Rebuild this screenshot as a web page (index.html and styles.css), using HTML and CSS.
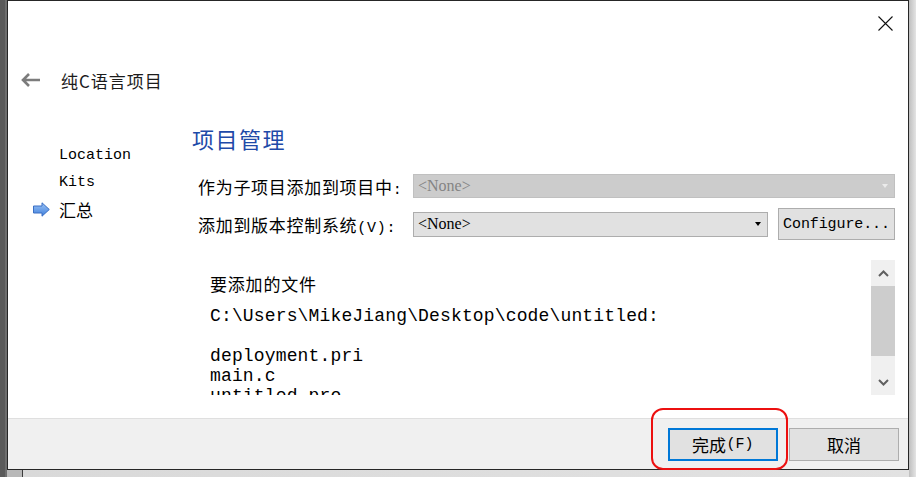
FILE: index.html
```html
<!DOCTYPE html>
<html lang="zh-CN">
<head>
<meta charset="utf-8">
<title>纯C语言项目</title>
<link rel="stylesheet" href="styles.css">
</head>
<body>
<div class="screen">
  <div class="side-left"></div>
  <div class="dialog">
    <div class="titlebar">
      <svg class="close" width="15" height="15" viewBox="0 0 15 15"><path d="M0.5 0.5 L14.5 14.5 M14.5 0.5 L0.5 14.5" stroke="#111" stroke-width="1.1" fill="none"/></svg>
    </div>
    <div class="titlerow">
      <svg class="back" width="20" height="14" viewBox="0 0 20 14"><path d="M8 1 L2 7 L8 13 M2 7 L19 7" stroke="#7c7c7c" stroke-width="2.6" fill="none"/></svg>
      <span class="wizard-title">纯C语言项目</span>
    </div>
    <div class="content">
      <nav class="steps">
        <div class="step"><span class="step-icon"></span><span class="latin">Location</span></div>
        <div class="step"><span class="step-icon"></span><span class="latin">Kits</span></div>
        <div class="step current"><span class="step-icon"><svg width="17" height="15" viewBox="0 0 17 15"><defs><linearGradient id="ag" x1="0" y1="0" x2="0" y2="1"><stop offset="0" stop-color="#9cc4f5"/><stop offset="1" stop-color="#3f7fdc"/></linearGradient></defs><path d="M0.5 4 L9 4 L9 0.8 L16.3 7.5 L9 14.2 L9 11 L0.5 11 Z" fill="url(#ag)" stroke="#3a6fc4" stroke-width="1"/></svg></span><span class="cjk">汇总</span></div>
      </nav>
      <main class="page">
        <h1 class="page-title">项目管理</h1>
        <div class="form">
          <label class="form-label">作为子项目添加到项目中<span class="latin">:</span></label>
          <div class="combo disabled wide"><span>&lt;None&gt;</span><span class="caret"></span></div>
          <label class="form-label">添加到版本控制系统<span class="latin">(V):</span></label>
          <div class="combo"><span>&lt;None&gt;</span><span class="caret"></span></div>
          <button class="btn configure">Configure...</button>
        </div>
        <div class="files">
          <div class="files-text">
            <div class="files-heading">要添加的文件</div>
<pre class="file-list">C:\Users\MikeJiang\Desktop\code\untitled:

deployment.pri
main.c
untitled.pro</pre>
          </div>
          <div class="scrollbar">
            <div class="sb-btn"><svg width="11" height="7" viewBox="0 0 11 7"><path d="M1 6 L5.5 1.5 L10 6" stroke="#606060" stroke-width="2" fill="none"/></svg></div>
            <div class="sb-thumb"></div>
            <div class="sb-track"></div>
            <div class="sb-btn"><svg width="11" height="7" viewBox="0 0 11 7"><path d="M1 1 L5.5 5.5 L10 1" stroke="#606060" stroke-width="2" fill="none"/></svg></div>
          </div>
        </div>
      </main>
    </div>
    <div class="footer">
      <button class="btn action primary"><span class="cjk">完成</span><span class="latin">(F)</span></button>
      <button class="btn action"><span class="cjk">取消</span></button>
    </div>
    <div class="annotation"></div>
  </div>
  <div class="side-right"></div>
  <div class="bottom"></div>
</div>
</body>
</html>
```
FILE: styles.css
```css
html, body {
  margin: 0;
  padding: 0;
}
body {
  width: 916px;
  height: 477px;
  overflow: hidden;
  background: #d6d6d6;
  font-family: "Noto Sans CJK SC", sans-serif;
  color: #000;
}
.screen {
  display: grid;
  grid-template-columns: 7px 902px 7px;
  grid-template-rows: 470px 7px;
  width: 916px;
  height: 477px;
}
.side-left {
  grid-column: 1;
  grid-row: 1 / 3;
  background: linear-gradient(to right, #5a5a5a 0 5px, #6e6e6e 5px 7px);
}
.side-right {
  grid-column: 3;
  grid-row: 1 / 3;
  background: linear-gradient(to right, #bfbfbf, #e4e4e4);
}
.bottom {
  grid-column: 2;
  grid-row: 2;
  background: linear-gradient(to right, #b8b8b8 0 15px, #3c3c3c 15px 16px, #d9d9d9 16px, #e2e2e2);
}
.dialog {
  grid-column: 2;
  grid-row: 1;
  position: relative;
  box-sizing: border-box;
  border: 1px solid #262626;
  background: #fff;
  display: flex;
  flex-direction: column;
}
.titlebar {
  height: 44px;
  display: flex;
  justify-content: flex-end;
  align-items: center;
  padding-right: 15px;
}
.close { display: block; }
.titlerow {
  height: 70px;
  display: flex;
  align-items: center;
  gap: 20px;
  padding-left: 13px;
}
.back { display: block; }
.wizard-title {
  font-size: 17px;
  letter-spacing: 1px;
  color: #1b1b1b;
}
.content {
  flex: 1;
  display: flex;
  min-height: 0;
}
.steps {
  width: 184px;
  box-sizing: border-box;
  padding: 27px 0 0 25px;
}
.step {
  height: 27px;
  display: flex;
  align-items: center;
}
.step-icon {
  width: 26px;
  height: 15px;
  display: flex;
  align-items: center;
}
.step-icon svg { display: block; }
.latin {
  font-family: "Liberation Mono", monospace;
  font-size: 15px;
}
.cjk {
  font-size: 17px;
}
.page {
  flex: 1;
  padding: 8px 13px 0 0;
}
.page-title {
  margin: 0;
  font-size: 22px;
  line-height: 30px;
  font-weight: normal;
  letter-spacing: 1.5px;
  color: #1e4aa8;
}
.form {
  margin: 21px 0 0 6px;
  display: grid;
  grid-template-columns: 205px 355px 1fr;
  grid-template-rows: 24px 32px;
  column-gap: 10px;
  row-gap: 10px;
  align-items: center;
}
.form-label {
  font-size: 17px;
  letter-spacing: 0.7px;
  white-space: nowrap;
}
.combo {
  box-sizing: border-box;
  height: 25px;
  border: 1px solid #adadad;
  background: #e1e1e1;
  display: flex;
  align-items: center;
  justify-content: space-between;
  padding: 0 6px 0 4px;
  font-family: "Liberation Serif", serif;
  font-size: 16px;
}
.combo.wide {
  grid-column: 2 / 4;
  height: 24px;
}
.combo.disabled {
  background: #cccccc;
  border-color: #c0c0c0;
  color: #848484;
}
.caret {
  width: 0;
  height: 0;
  border-left: 3.5px solid transparent;
  border-right: 3.5px solid transparent;
  border-top: 4px solid #000;
}
.combo.disabled .caret {
  border-top-color: #ebebeb;
}
.btn {
  box-sizing: border-box;
  margin: 0;
  border: 1px solid #adadad;
  background: #e1e1e1;
  color: #000;
  padding: 0;
  display: flex;
  align-items: center;
  justify-content: center;
}
.configure {
  height: 32px;
  font-family: "Liberation Mono", monospace;
  font-size: 15px;
  letter-spacing: -0.1px;
}
.files {
  margin: 20px 0 0 8px;
  height: 135px;
  display: flex;
}
.files-text {
  flex: 1;
  overflow: hidden;
  padding: 12px 0 0 10px;
}
.files-heading {
  font-size: 17px;
  line-height: 24px;
  letter-spacing: 0.8px;
}
.file-list {
  margin: 10px 0 0;
  font-family: "Liberation Mono", monospace;
  font-size: 18px;
  line-height: 20px;
  letter-spacing: 0.15px;
}
.scrollbar {
  width: 24px;
  background: #f0f0f0;
  display: flex;
  flex-direction: column;
}
.sb-btn {
  height: 26px;
  display: flex;
  align-items: center;
  justify-content: center;
}
.sb-btn svg { display: block; }
.sb-thumb {
  height: 70px;
  background: #cdcdcd;
}
.sb-track { flex: 1; }
.footer {
  box-sizing: border-box;
  height: 51px;
  border-top: 1px solid #dfdfdf;
  background: #f0f0f0;
  display: flex;
  justify-content: flex-end;
  align-items: flex-start;
  gap: 11px;
  padding: 9px 9px 0 0;
}
.action {
  width: 110px;
  height: 33px;
}
.action.primary {
  border: 2px solid #0078d7;
}
.annotation {
  position: absolute;
  left: 643px;
  top: 407px;
  width: 137px;
  height: 62px;
  box-sizing: border-box;
  border: 2px solid #ec1010;
  border-radius: 12px;
}
```
